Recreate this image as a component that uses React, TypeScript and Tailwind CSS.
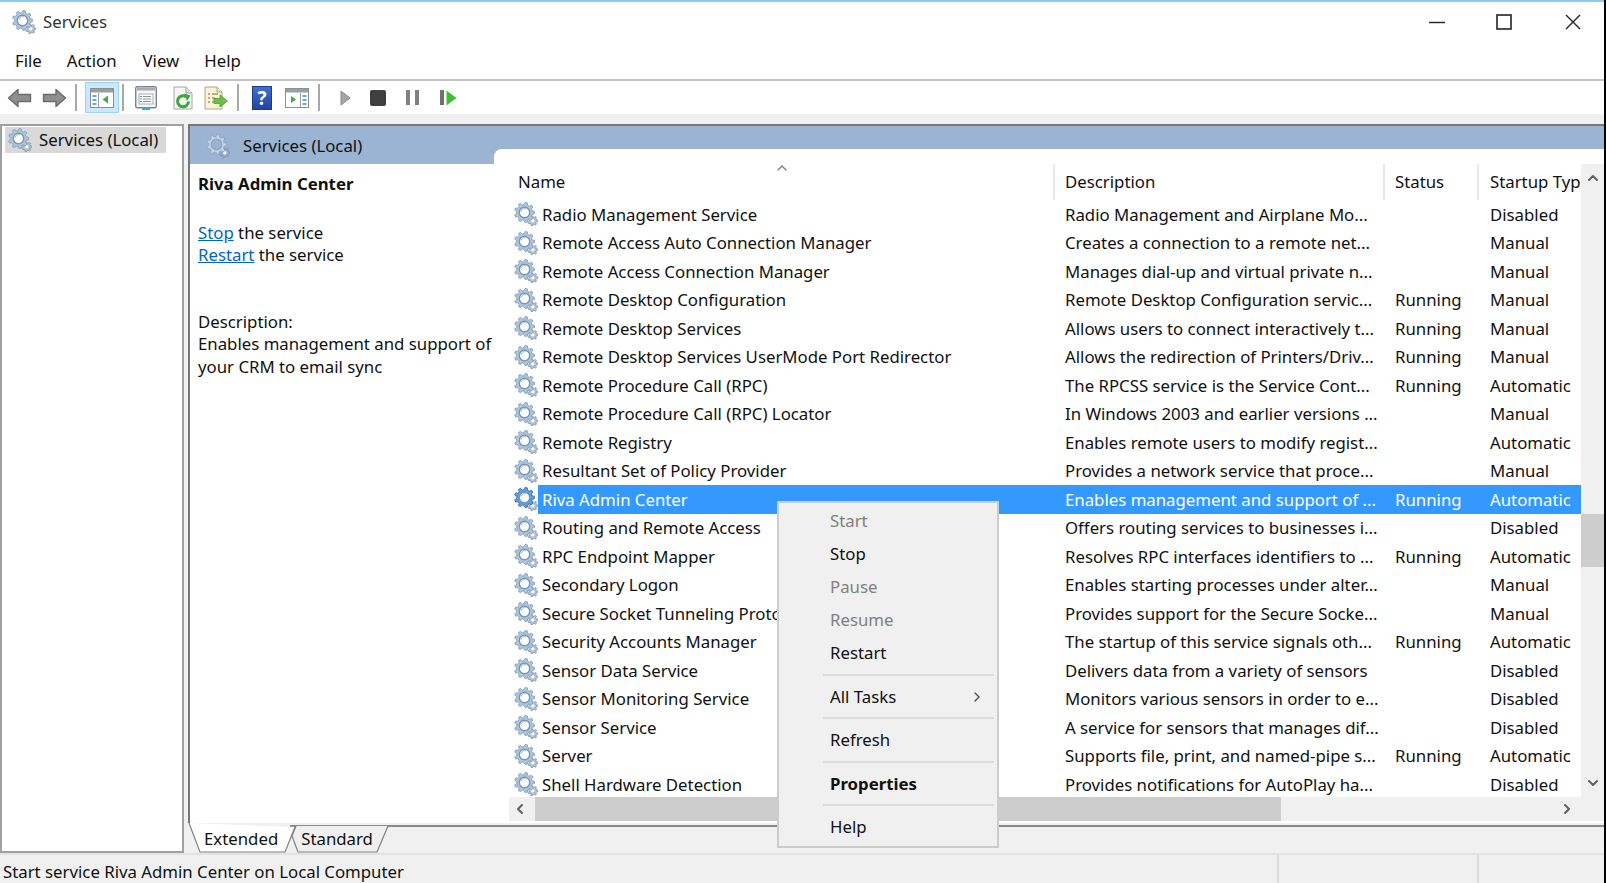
import { ChevronLeft, ChevronRight, ChevronUp, ChevronDown } from "lucide-react";

type Row = [string, string, string, string];

const rows: Row[] = [
  ["Radio Management Service", "Radio Management and Airplane Mo...", "", "Disabled"],
  ["Remote Access Auto Connection Manager", "Creates a connection to a remote net...", "", "Manual"],
  ["Remote Access Connection Manager", "Manages dial-up and virtual private n...", "", "Manual"],
  ["Remote Desktop Configuration", "Remote Desktop Configuration servic...", "Running", "Manual"],
  ["Remote Desktop Services", "Allows users to connect interactively t...", "Running", "Manual"],
  ["Remote Desktop Services UserMode Port Redirector", "Allows the redirection of Printers/Driv...", "Running", "Manual"],
  ["Remote Procedure Call (RPC)", "The RPCSS service is the Service Cont...", "Running", "Automatic"],
  ["Remote Procedure Call (RPC) Locator", "In Windows 2003 and earlier versions ...", "", "Manual"],
  ["Remote Registry", "Enables remote users to modify regist...", "", "Automatic"],
  ["Resultant Set of Policy Provider", "Provides a network service that proce...", "", "Manual"],
  ["Riva Admin Center", "Enables management and support of ...", "Running", "Automatic"],
  ["Routing and Remote Access", "Offers routing services to businesses i...", "", "Disabled"],
  ["RPC Endpoint Mapper", "Resolves RPC interfaces identifiers to ...", "Running", "Automatic"],
  ["Secondary Logon", "Enables starting processes under alter...", "", "Manual"],
  ["Secure Socket Tunneling Protocol Service", "Provides support for the Secure Socke...", "", "Manual"],
  ["Security Accounts Manager", "The startup of this service signals oth...", "Running", "Automatic"],
  ["Sensor Data Service", "Delivers data from a variety of sensors", "", "Disabled"],
  ["Sensor Monitoring Service", "Monitors various sensors in order to e...", "", "Disabled"],
  ["Sensor Service", "A service for sensors that manages dif...", "", "Disabled"],
  ["Server", "Supports file, print, and named-pipe s...", "Running", "Automatic"],
  ["Shell Hardware Detection", "Provides notifications for AutoPlay ha...", "", "Disabled"],
];

// Cog outline, computed once per size
function cogPath(cx: number, cy: number, outer: number, inner: number, teeth: number) {
  const pts: string[] = [];
  const step = (Math.PI * 2) / teeth;
  for (let i = 0; i < teeth; i++) {
    const a = i * step;
    const corners: [number, number][] = [
      [inner, a - step * 0.32],
      [outer, a - step * 0.17],
      [outer, a + step * 0.17],
      [inner, a + step * 0.32],
    ];
    for (const [r, t] of corners) {
      pts.push(`${(cx + r * Math.cos(t)).toFixed(2)} ${(cy + r * Math.sin(t)).toFixed(2)}`);
    }
  }
  return "M" + pts.join("L") + "Z";
}

const bigCog = cogPath(10.5, 10.5, 10, 7.8, 9);
const smallCog = cogPath(18.8, 18.8, 5, 3.6, 7);

function Gear({ variant = "normal" }: { variant?: "normal" | "selected" | "pale" }) {
  const fill = variant === "selected" ? "#5f9fe0" : variant === "pale" ? "#c3d6e8" : "#aac6e0";
  const stroke = variant === "selected" ? "#3f78b8" : variant === "pale" ? "#8fa9c2" : "#90a6ba";
  const ring = variant === "pale" ? "#8ea6c0" : "#7d96ad";
  const hole = variant === "pale" ? "#9ab4d2" : "#ffffff";
  return (
    <svg viewBox="0 0 24 24" className="w-6 h-6 shrink-0">
      <path d={smallCog} fill={variant === "pale" ? "#9ab4d2" : "#b4c4d2"} stroke={variant === "pale" ? "#7f93a8" : "#8ba1b5"} strokeWidth="1" />
      <circle cx="18.8" cy="18.8" r="1.6" fill="#fff" />
      <path d={bigCog} fill={fill} stroke={stroke} strokeWidth="1" />
      <circle cx="10.5" cy="10.5" r="5.2" fill={hole} stroke={ring} strokeWidth="1.4" />
      <path d="M7 9.5a4 4 0 0 1 5-2.6" fill="none" stroke="#a4bad0" strokeWidth="1" />
    </svg>
  );
}

function ArrowLeft() {
  return (
    <svg viewBox="0 0 25 22" className="w-[25px] h-[22px]">
      <path d="M1.5 11L11 2.5V7.5H23.5V14.5H11V19.5Z" fill="#8f8f8f" stroke="#6b6b6b" strokeWidth="1.4" strokeLinejoin="round" />
    </svg>
  );
}

function ArrowRight() {
  return (
    <svg viewBox="0 0 25 22" className="w-[25px] h-[22px]">
      <path d="M23.5 11L14 2.5V7.5H1.5V14.5H14V19.5Z" fill="#8f8f8f" stroke="#6b6b6b" strokeWidth="1.4" strokeLinejoin="round" />
    </svg>
  );
}

function PaneIcon({ flip }: { flip?: boolean }) {
  return (
    <svg viewBox="0 0 24 20" className="w-6 h-5">
      <rect x="0.5" y="0.5" width="23" height="19" fill="#fff" stroke="#8a8f96" />
      <rect x="1" y="1" width="22" height="3.5" fill="#9a9fa6" />
      {flip ? (
        <>
          <path d="M6 8L11 11.5L6 15Z" fill="#3fae3c" />
          <line x1="15.5" y1="5" x2="15.5" y2="19" stroke="#9aa0a8" />
          <rect x="17.5" y="7" width="4" height="2" fill="#6aa5de" />
          <rect x="17.5" y="11" width="4" height="2" fill="#6aa5de" />
          <rect x="17.5" y="15" width="4" height="2" fill="#6aa5de" />
        </>
      ) : (
        <>
          <line x1="8.5" y1="5" x2="8.5" y2="19" stroke="#9aa0a8" />
          <rect x="2.5" y="7" width="4" height="2" fill="#6aa5de" />
          <rect x="2.5" y="11" width="4" height="2" fill="#6aa5de" />
          <rect x="2.5" y="15" width="4" height="2" fill="#6aa5de" />
          <path d="M18 7.5L12.5 11.5L18 15.5Z" fill="#3fae3c" />
        </>
      )}
    </svg>
  );
}

function PropsIcon() {
  return (
    <svg viewBox="0 0 22 24" className="w-[22px] h-6">
      <rect x="0.7" y="0.7" width="20.6" height="21" rx="1.5" fill="#f4f6f8" stroke="#7e8389" strokeWidth="1.4" />
      <rect x="2" y="2" width="18" height="2.5" fill="#a7acb2" />
      <rect x="4" y="8" width="14" height="10" fill="#fff" stroke="#aab0b6" />
      <path d="M8 10.5H16M8 13H16M8 15.5H16" stroke="#8a9098" />
      <path d="M5 10.5H7M5 13H7M5 15.5H7" stroke="#5aa2e0" />
      <rect x="7" y="21.5" width="8" height="2.5" fill="#39a7e0" />
    </svg>
  );
}

function RefreshIcon() {
  return (
    <svg viewBox="0 0 20 24" className="w-5 h-6">
      <path d="M1 1H13L19 7V23H1Z" fill="#f6f6f6" stroke="#a3a6aa" />
      <path d="M13 1V7H19" fill="#e4e4e4" stroke="#a3a6aa" />
      <path d="M15.5 15.5a5.5 5.5 0 1 1-2.2-4.6" fill="none" stroke="#3fa63a" strokeWidth="3" />
      <path d="M11 7.5L17.5 9.5L14 15Z" fill="#3fa63a" />
    </svg>
  );
}

function ExportIcon() {
  return (
    <svg viewBox="0 0 24 24" className="w-6 h-6">
      <path d="M1 1H13L18 6V23H1Z" fill="#fbf3cf" stroke="#a8a595" />
      <path d="M13 1V6H18" fill="#eee8c4" stroke="#a8a595" />
      <path d="M4 8H6M8 8H14M4 12H6M8 12H11M4 16H6M8 16H11" stroke="#6a6a6a" />
      <path d="M10 12.5H16V9L23.5 15L16 21V17.5H10Z" fill="#6cc04a" stroke="#4b9a32" strokeWidth="0.8" />
    </svg>
  );
}

function HelpIcon() {
  return (
    <svg viewBox="0 0 20 24" className="w-5 h-6">
      <defs>
        <linearGradient id="helpBook" x1="0" y1="0" x2="0" y2="1">
          <stop offset="0" stopColor="#3f6fd8" />
          <stop offset="1" stopColor="#24439c" />
        </linearGradient>
      </defs>
      <rect x="0.5" y="0.5" width="19" height="23" fill="url(#helpBook)" stroke="#1f3a86" />
      <text x="10" y="18.5" textAnchor="middle" fontSize="19" fontWeight="700" fill="#fff">?</text>
    </svg>
  );
}

function Sep({ className }: { className: string }) {
  return <div className={`w-[2px] h-[27px] bg-[#a8a8a8] shrink-0 ${className}`} />;
}

function WindowButtons() {
  return (
    <div className="ml-auto flex items-center">
      <svg viewBox="0 0 16 16" className="w-4 h-4">
        <path d="M0 8.5H16" stroke="#222" strokeWidth="1.4" />
      </svg>
      <svg viewBox="0 0 16 16" className="ml-[51px] w-4 h-4">
        <rect x="1" y="1" width="14" height="14" fill="none" stroke="#222" strokeWidth="1.6" />
      </svg>
      <svg viewBox="0 0 16 16" className="ml-[53px] w-4 h-4">
        <path d="M1 1L15 15M15 1L1 15" stroke="#222" strokeWidth="1.4" />
      </svg>
    </div>
  );
}

function Toolbar() {
  return (
    <div className="h-[33px] flex items-center bg-white pl-[7px] shrink-0">
      <ArrowLeft />
      <div className="ml-[10px]"><ArrowRight /></div>
      <Sep className="ml-[8px]" />
      <div className="ml-[8px] w-[34px] h-[31px] flex items-center justify-center bg-[#cce8ff] border border-[#99d1ff]">
        <PaneIcon />
      </div>
      <Sep className="ml-[3px]" />
      <div className="ml-[11px]"><PropsIcon /></div>
      <div className="ml-[16px]"><RefreshIcon /></div>
      <div className="ml-[11px]"><ExportIcon /></div>
      <Sep className="ml-[9px]" />
      <div className="ml-[13px]"><HelpIcon /></div>
      <div className="ml-[13px]"><PaneIcon flip /></div>
      <Sep className="ml-[9px]" />
      <svg viewBox="0 0 11 16" className="ml-[20px] w-[11px] h-4">
        <path d="M1 1L10 8L1 15Z" fill="#a6a6a6" stroke="#8a8a8a" />
      </svg>
      <div className="ml-[19px] w-4 h-4 rounded-[2px] bg-[#3f3f3f]" />
      <div className="ml-[20px] flex gap-[5px]">
        <div className="w-1 h-[15px] bg-[#808080]" />
        <div className="w-1 h-[15px] bg-[#808080]" />
      </div>
      <div className="ml-[21px] flex items-center gap-[2px]">
        <div className="w-1 h-[15px] bg-[#707070]" />
        <svg viewBox="0 0 11 16" className="w-[11px] h-4">
          <path d="M0.5 0.5L10.5 8L0.5 15.5Z" fill="#3fc12f" />
        </svg>
      </div>
    </div>
  );
}

function TreePane() {
  return (
    <div className="w-[184px] shrink-0 bg-white border-2 border-[#a0a0a0] pl-[3px] pt-px">
      <div className="w-[161px] h-[26px] bg-[#d9d9d9] flex items-center pl-[3px]">
        <Gear />
        <span className="ml-[7px]">Services (Local)</span>
      </div>
    </div>
  );
}

function DetailPane() {
  return (
    <div className="w-[304px] shrink-0 flex flex-col">
      <div className="h-[38px] shrink-0 flex items-center pl-[16px] pt-px">
        <Gear variant="pale" />
        <span className="ml-[13px]">Services (Local)</span>
      </div>
      <div className="flex-1 bg-white pl-[8px] pt-[9px] leading-[22.5px]">
        <div className="font-bold">Riva Admin Center</div>
        <div className="mt-[26px]"><a className="text-[#0066cc] underline">Stop</a> the service</div>
        <div><a className="text-[#0066cc] underline">Restart</a> the service</div>
        <div className="mt-[44px]">Description:</div>
        <div className="whitespace-nowrap">Enables management and support of<br />your CRM to email sync</div>
      </div>
    </div>
  );
}

function ListRow({ row }: { row: Row }) {
  const selected = row[0] === "Riva Admin Center";
  const cell = selected ? "bg-[#3399ff] text-white" : "";
  return (
    <div className="grid grid-cols-[546px_330px_94px_102px] h-[28.5px] items-stretch">
      <div className="flex items-center pl-[5px] overflow-hidden">
        <Gear variant={selected ? "selected" : "normal"} />
        <div className={`flex-1 h-full flex items-center pl-[4px] whitespace-nowrap ${cell}`}>{row[0]}</div>
      </div>
      <div className={`flex items-center pl-[10px] whitespace-nowrap overflow-hidden ${cell}`}>{row[1]}</div>
      <div className={`flex items-center pl-[10px] whitespace-nowrap ${cell}`}>{row[2]}</div>
      <div className={`flex items-center pl-[11px] whitespace-nowrap overflow-hidden ${cell}`}>{row[3]}</div>
    </div>
  );
}

function ServiceList() {
  return (
    <div className="flex-1 flex flex-col mt-[23px] bg-white rounded-tl-[8px] pt-[15px] pl-[15px] min-w-0">
      <div className="flex h-[633px] shrink-0">
        <div className="w-[1072px] shrink-0 overflow-hidden">
          <div className="relative grid grid-cols-[546px_330px_94px_102px] h-[36px] items-center">
            <div className="pl-[9px] h-full flex items-center border-r-2 border-[#e8e8e8]">Name</div>
            <div className="pl-[10px] h-full flex items-center border-r-2 border-[#e8e8e8]">Description</div>
            <div className="pl-[10px] h-full flex items-center border-r-2 border-[#e8e8e8]">Status</div>
            <div className="pl-[11px] h-full flex items-center whitespace-nowrap">Startup Typ</div>
            <ChevronUp className="absolute left-[265px] top-[-4px] w-4 h-4 text-[#808080]" strokeWidth={2} />
          </div>
          {rows.map((r) => (
            <ListRow key={r[0]} row={r} />
          ))}
        </div>
        <div className="flex-1 bg-[#f0f0f0] flex flex-col items-center">
          <div className="h-[28px] w-full flex items-center justify-center shrink-0">
            <ChevronUp className="w-4 h-4 text-[#606060]" strokeWidth={3} />
          </div>
          <div className="h-[322px] shrink-0" />
          <div className="h-[53px] w-full bg-[#cdcdcd] shrink-0" />
          <div className="flex-1" />
          <div className="h-[28px] w-full flex items-center justify-center shrink-0">
            <ChevronDown className="w-4 h-4 text-[#606060]" strokeWidth={3} />
          </div>
        </div>
      </div>
      <div className="h-[24px] shrink-0 bg-[#f0f0f0] flex items-center">
        <div className="w-[22px] mr-[4px] flex justify-center">
          <ChevronLeft className="w-4 h-4 text-[#606060]" strokeWidth={3} />
        </div>
        <div className="w-[746px] h-full bg-[#cdcdcd]" />
        <div className="flex-1" />
        <div className="w-[24px] mr-[25px] flex justify-center">
          <ChevronRight className="w-4 h-4 text-[#606060]" strokeWidth={3} />
        </div>
      </div>
    </div>
  );
}

function TabStrip() {
  return (
    <div className="h-[30px] shrink-0 relative bg-[#f0f0f0] flex items-center pl-[16px] gap-[35px]">
      <div className="absolute left-[102px] right-0 top-[2px] h-[2px] bg-[#8a8a8a]" />
      <svg viewBox="0 0 210 30" className="absolute left-0 top-0 w-[210px] h-[30px]">
        <path d="M1 0L12 29H97L107 4" fill="#fff" stroke="#808080" strokeWidth="1.2" />
        <path d="M108 3L104 13L110 29H189L200 3" fill="#f0f0f0" stroke="#808080" strokeWidth="1.2" />
      </svg>
      <span className="relative mt-[2px]">Extended</span>
      <span className="relative mt-[2px] -ml-[12px]">Standard</span>
    </div>
  );
}

function ContextMenu() {
  const item = "h-[33px] flex items-center pl-[51px]";
  const sep = "h-[2px] bg-[#dcdcdc] ml-[44px] mr-[3px] my-[4.25px]";
  return (
    <div className="absolute left-[777px] top-[501px] w-[222px] h-[347px] bg-[#f0f0f0] border-2 border-[#cccccc] pt-[1.5px]">
      <div className={`${item} text-[#808080]`}>Start</div>
      <div className={item}>Stop</div>
      <div className={`${item} text-[#808080]`}>Pause</div>
      <div className={`${item} text-[#808080]`}>Resume</div>
      <div className={item}>Restart</div>
      <div className={sep} />
      <div className={`${item} justify-between pr-[12px]`}>
        <span>All Tasks</span>
        <ChevronRight className="w-4 h-4 text-[#505050]" strokeWidth={2} />
      </div>
      <div className={sep} />
      <div className={item}>Refresh</div>
      <div className={sep} />
      <div className={`${item} font-bold`}>Properties</div>
      <div className={sep} />
      <div className={item}>Help</div>
    </div>
  );
}

export default function App() {
  return (
    <div className="relative w-[1606px] h-[883px] overflow-hidden flex flex-col bg-white border-r-2 border-black text-[16.8px] text-[#111] font-['Noto_Sans','Open_Sans',sans-serif]">
      <div className="h-[2px] bg-[#8cc8f5] shrink-0" />
      <div className="h-[40px] shrink-0 flex items-center pl-[12px] pr-[23px]">
        <Gear />
        <span className="ml-[7px] text-[#333]">Services</span>
        <WindowButtons />
      </div>
      <div className="h-[39px] shrink-0 flex items-center border-b-2 border-[#c4c4c4] pl-[15px] pt-px">
        <span>File</span>
        <span className="ml-[25px]">Action</span>
        <span className="ml-[26px]">View</span>
        <span className="ml-[25px]">Help</span>
      </div>
      <Toolbar />
      <div className="flex-1 flex flex-col bg-[#f0f0f0] pt-[10px] min-h-0">
        <div className="flex-1 flex min-h-0 gap-[4px]">
          <TreePane />
          <div className="flex-1 flex flex-col min-w-0">
            <div className="flex-1 flex flex-col border-t-2 border-l-2 border-[#777] min-h-0">
              <div className="flex-1 flex bg-[#9ab4d2] min-h-0">
                <DetailPane />
                <ServiceList />
              </div>
            </div>
            <TabStrip />
          </div>
        </div>
      </div>
      <div className="h-[30px] shrink-0 bg-[#f0f0f0] border-t-2 border-[#e2e2e2] flex items-center">
        <span className="pl-[3px] pt-[5px] w-[1277px] shrink-0">Start service Riva Admin Center on Local Computer</span>
        <div className="w-[200px] h-full border-l-2 border-[#dcdcdc]" />
        <div className="flex-1 h-full border-l-2 border-[#dcdcdc]" />
      </div>
      <ContextMenu />
    </div>
  );
}
